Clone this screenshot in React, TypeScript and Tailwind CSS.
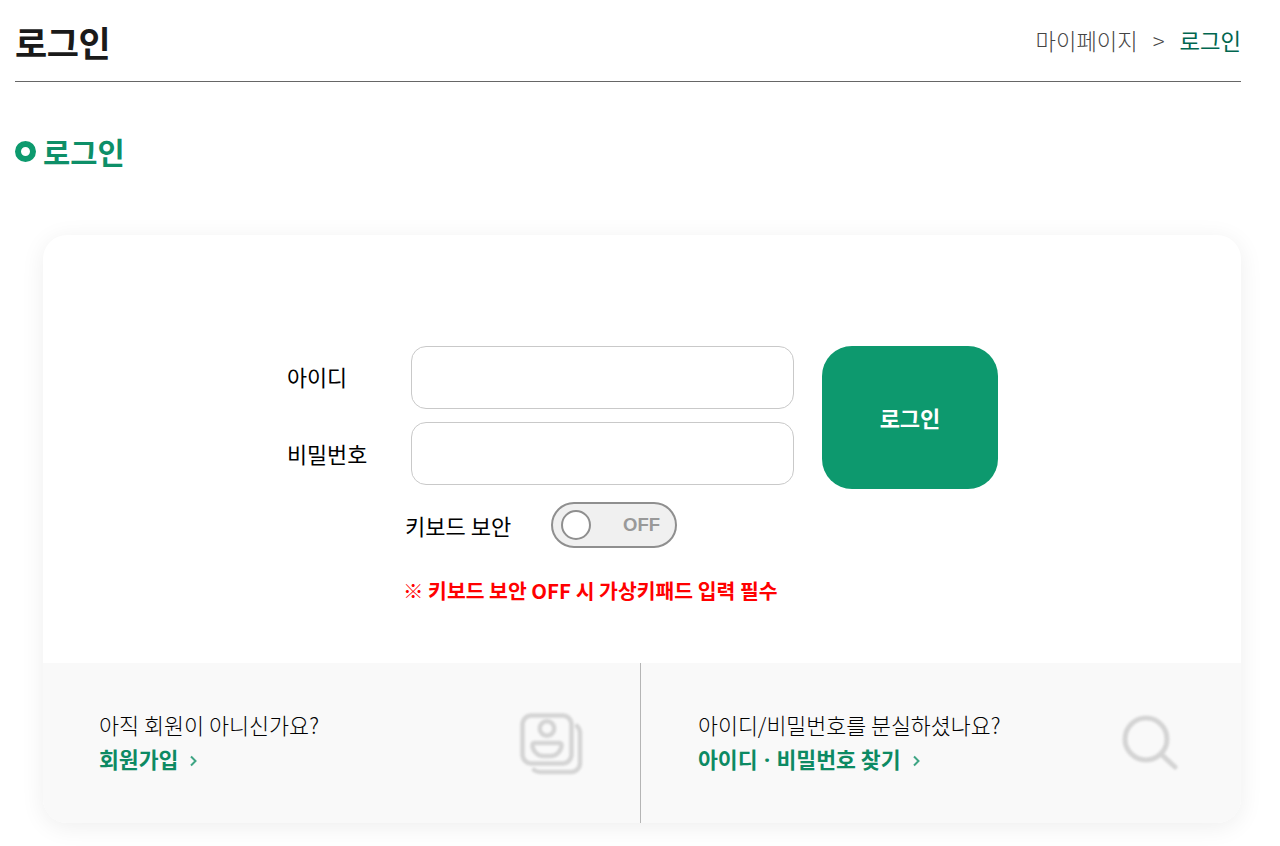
import React from 'react';

const FONT = 'font-["Noto_Sans_CJK_KR","Noto_Sans",sans-serif]';

const MemberIcon: React.FC = () => (
  <svg width="64" height="64" viewBox="0 0 64 64" fill="none" stroke="#d4d4d4" strokeWidth="4.5" strokeLinecap="round" strokeLinejoin="round" className="blur-[0.8px]">
    <rect x="3.5" y="4.5" width="49" height="48" rx="9" />
    <circle cx="28" cy="17.5" r="7.2" />
    <path d="M15.5 32h25a2 2 0 0 1 2 2a11 11 0 0 1-11 11h-7a11 11 0 0 1-11-11a2 2 0 0 1 2-2z" />
    <path d="M58 15c2 2 3 4 3 7v30a9 9 0 0 1-9 9H22c-3 0-5-.5-7-2" />
  </svg>
);

const SearchIcon: React.FC = () => (
  <svg width="56" height="56" viewBox="0 0 56 56" fill="none" stroke="#d4d4d4" strokeWidth="5" strokeLinecap="round" className="blur-[0.8px]">
    <circle cx="24" cy="24" r="21" />
    <path d="M40 40l13 12" />
  </svg>
);

const Chevron: React.FC = () => (
  <svg width="7" height="12" viewBox="0 0 7 12" fill="none" stroke="#3fa584" strokeWidth="2" className="ml-[12px] mt-[3px]">
    <path d="M1 1.5l4.5 4.5L1 10.5" />
  </svg>
);

const App: React.FC = () => {
  return (
    <div className={`${FONT} w-[1280px] h-[846px] overflow-hidden bg-white pl-[15px] pr-[39px]`}>
      <div className="flex justify-between items-center h-[82px] border-b border-[#666666]">
        <h1 className="pt-[2px] text-[35px] font-bold leading-none tracking-[-0.5px] text-[#1a1a1a]">로그인</h1>
        <div className="flex items-center text-[22.2px] font-light leading-none text-[#444444]">
          <span>마이페이지</span>
          <span className="mx-[15px] text-[22px]">&gt;</span>
          <span className="text-[#00664f] font-normal text-[22.3px]">로그인</span>
        </div>
      </div>

      <div className="flex items-center mt-[51px] h-[36px]">
        <span className="w-[21px] h-[21px] rounded-full border-[6px] border-[#0d9a6e]" />
        <h2 className="ml-[7px] pt-[2px] text-[29.6px] font-bold leading-none text-[#0d8f68]">로그인</h2>
      </div>

      <div className="ml-[28px] mt-[66px] h-[588px] rounded-[24px] bg-white shadow-[0_4px_24px_rgba(0,0,0,0.07)] overflow-hidden flex flex-col">
        <div className="h-[428px] pt-[111px] pl-[244px]">
          <div className="flex">
            <div className="w-[507px]">
              <div className="flex items-center h-[63px]">
                <label className="w-[124px] text-[21.8px] leading-none text-black pb-[2px]">아이디</label>
                <input className="w-[383px] h-[63px] rounded-[15px] border border-[#c9c9c9] bg-white" />
              </div>
              <div className="flex items-center h-[63px] mt-[13px]">
                <label className="w-[124px] text-[21.8px] leading-none text-black">비밀번호</label>
                <input className="w-[383px] h-[63px] rounded-[15px] border border-[#c9c9c9] bg-white" />
              </div>
            </div>
            <button className="ml-[28px] w-[176px] h-[143px] rounded-[30px] bg-[#0d996e] text-white text-[22px] font-bold">로그인</button>
          </div>

          <div className="flex items-center ml-[118px] mt-[13px] h-[46px]">
            <span className="w-[146px] text-[22px] leading-none text-black pb-[1px]">키보드 보안</span>
            <div className="w-[126px] h-[46px] rounded-full border-2 border-[#8f8f8f] bg-[#f0f0f0] flex items-center justify-between pl-[8px] pr-[15px]">
              <span className="w-[30px] h-[30px] rounded-full border-2 border-[#8f8f8f] bg-white" />
              <span className='font-["Liberation_Sans",sans-serif] text-[18.5px] font-bold text-[#999999]'>OFF</span>
            </div>
          </div>

          <p className="ml-[116px] mt-[32px] text-[20.45px] font-bold leading-none text-[#ff0000]">※ 키보드 보안 OFF 시 가상키패드 입력 필수</p>
        </div>

        <div className="flex h-[160px] bg-[#f9f9f9]">
          <div className="w-[598px] border-r border-[#b5b5b5] flex items-center justify-between pl-[56px] pr-[57px]">
            <div className="-mt-[2px]">
              <p className="text-[21.8px] font-light leading-[30px] text-black">아직 회원이 아니신가요?</p>
              <div className="flex items-center mt-[4px] text-[21.6px] font-bold leading-[30px] text-[#0d8a63]">
                회원가입<Chevron />
              </div>
            </div>
            <MemberIcon />
          </div>
          <div className="flex-1 flex items-center justify-between pl-[57px] pr-[63px]">
            <div className="-mt-[2px]">
              <p className="text-[21.7px] font-light leading-[30px] text-black">아이디/비밀번호를 분실하셨나요?</p>
              <div className="flex items-center mt-[4px] text-[21.6px] font-bold leading-[30px] text-[#0d8a63]">
                <span>아이디 <span className='mx-[1.5px] font-["Noto_Sans",sans-serif]'>·</span> 비밀번호 찾기</span><Chevron />
              </div>
            </div>
            <SearchIcon />
          </div>
        </div>
      </div>
    </div>
  );
};

export default App;
